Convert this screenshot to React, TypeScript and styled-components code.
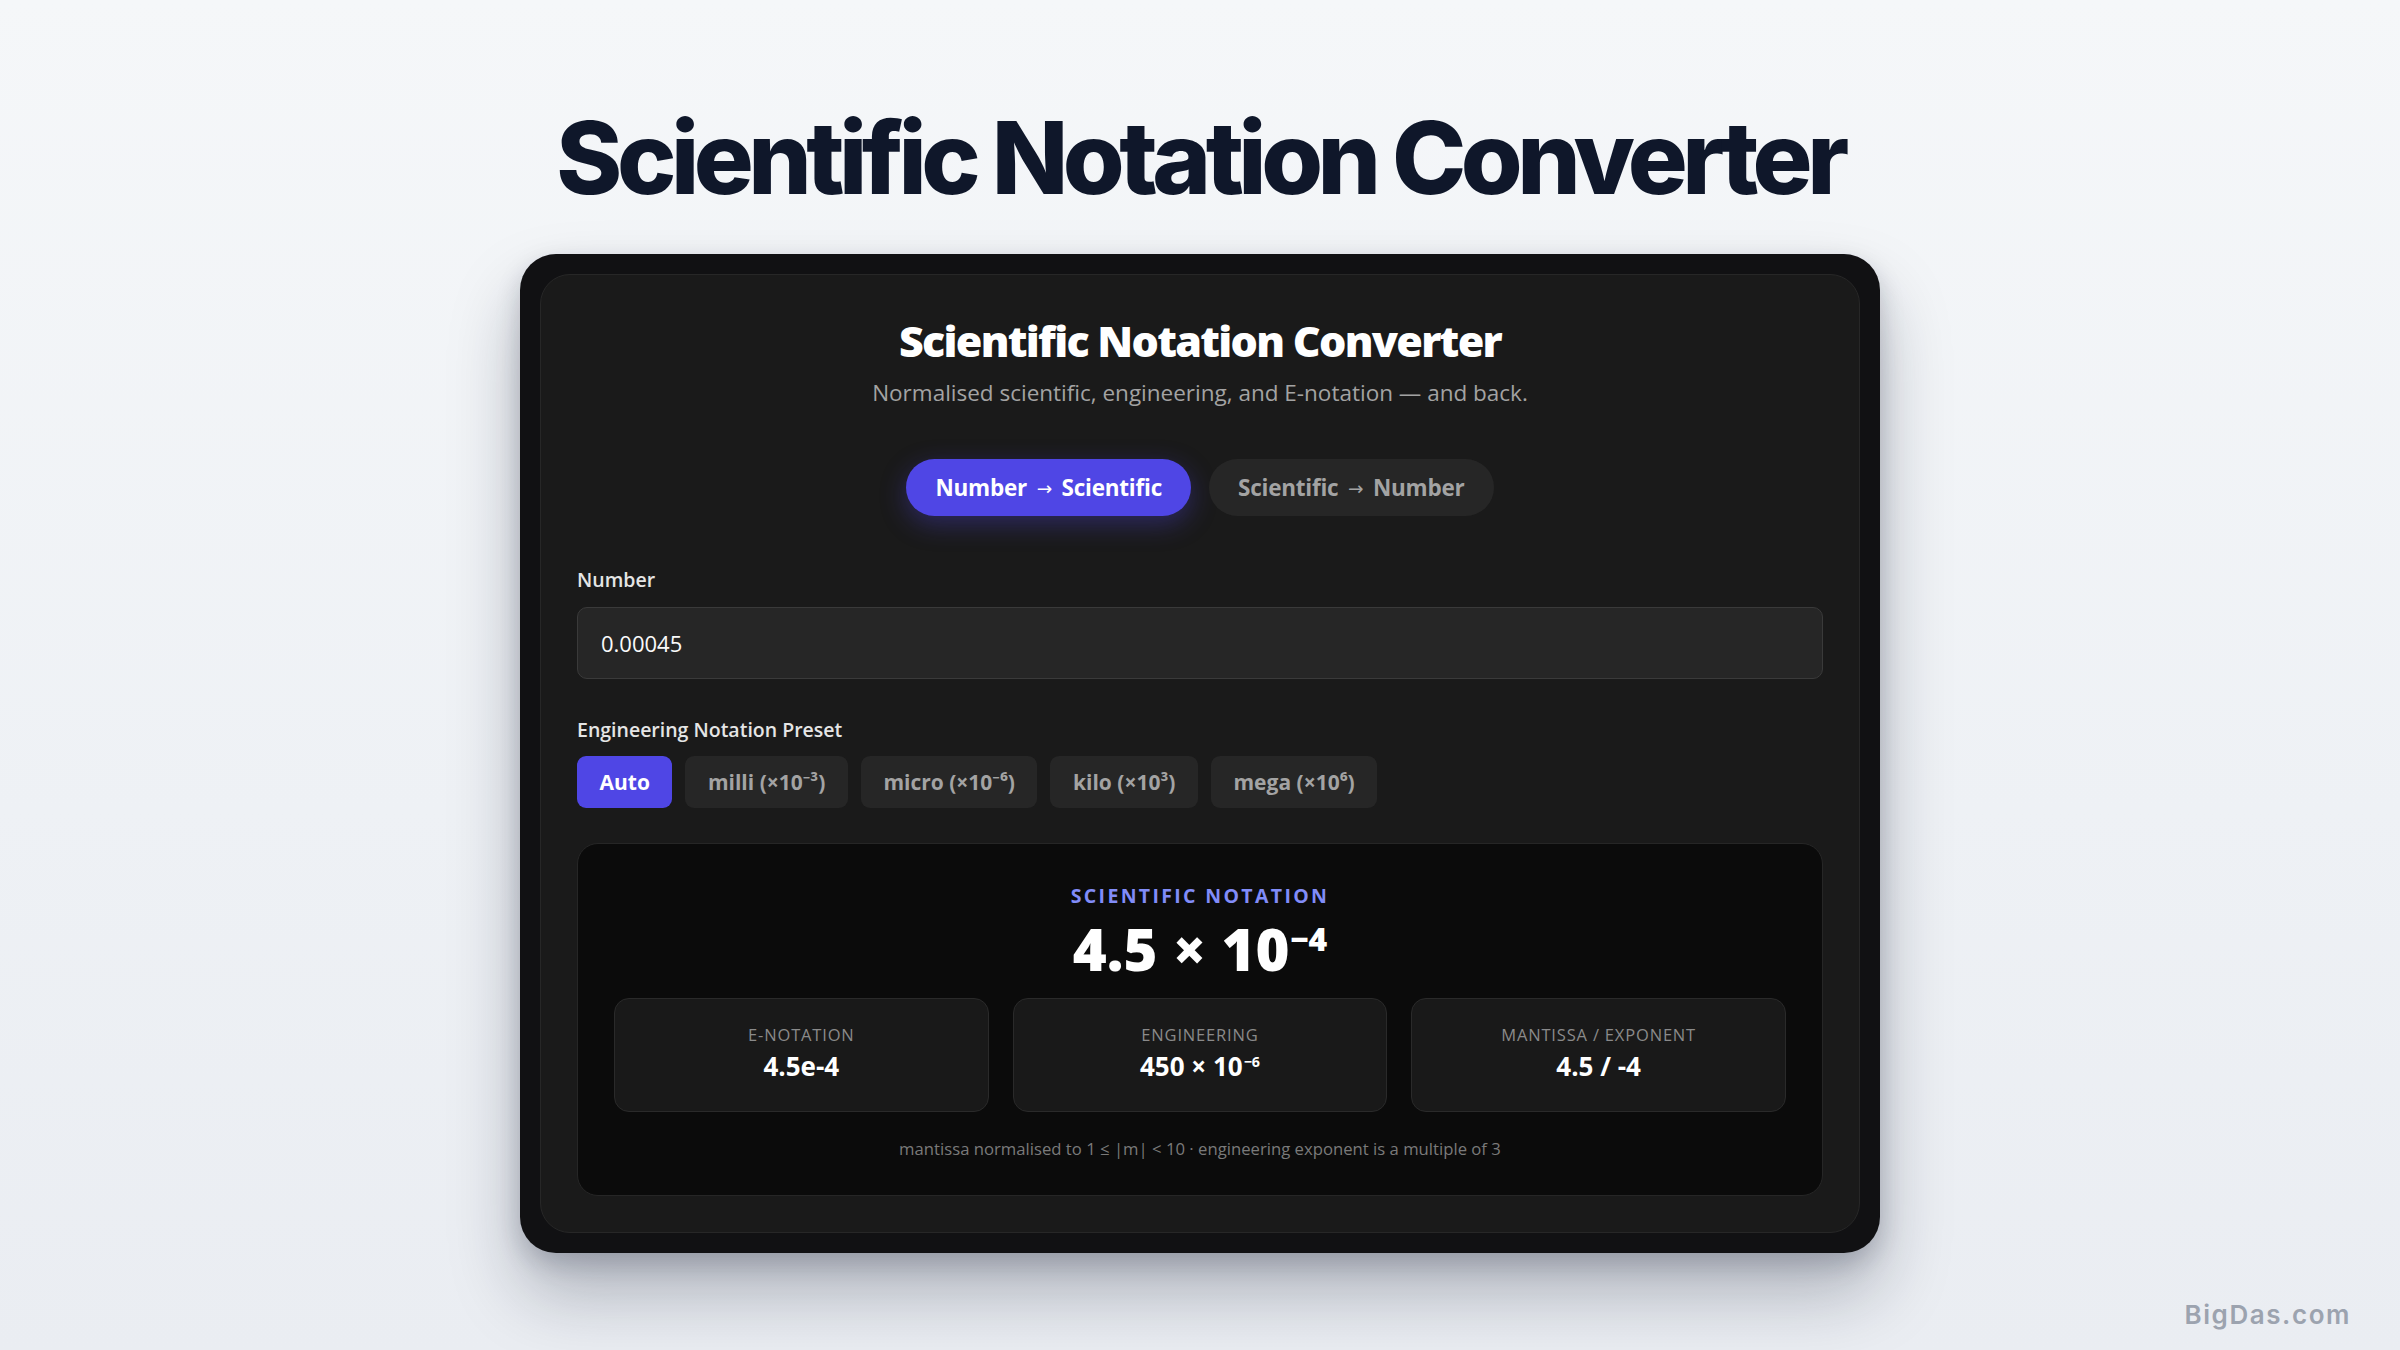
import React from "react";
import styled, { createGlobalStyle } from "styled-components";

const Global = createGlobalStyle`
  * { box-sizing: border-box; }
  html, body { margin: 0; padding: 0; }
  body {
    width: 2400px;
    height: 1350px;
    overflow: hidden;
    background: linear-gradient(180deg, #f5f7f9 0%, #eef1f5 60%, #eaedf2 100%);
    font-family: "Open Sans", "Noto Sans", sans-serif;
  }
`;

const Page = styled.main`
  position: relative;
  width: 2400px;
  height: 1350px;
  display: flex;
  flex-direction: column;
  align-items: center;
  padding-top: 104px;
`;

const PageTitle = styled.h1`
  margin: 0 0 42px;
  font-family: Inter, "Liberation Sans", sans-serif;
  font-weight: 800;
  font-size: 100px;
  line-height: 108px;
  letter-spacing: -0.055em;
  color: #0f172a;
`;

const Frame = styled.div`
  width: 1360px;
  padding: 20px;
  background: #111113;
  border-radius: 36px;
  box-shadow: 0 40px 70px rgba(15, 23, 42, 0.28), 0 10px 24px rgba(15, 23, 42, 0.18);
`;

const Card = styled.section`
  background: #1a1a1a;
  border: 1.5px solid #272727;
  border-radius: 30px;
  padding: 39px 36px 36px;
  display: flex;
  flex-direction: column;
  color: #fff;
`;

const CardTitle = styled.h2`
  margin: 0;
  text-align: center;
  font-size: 43px;
  line-height: 54px;
  font-weight: 800;
  letter-spacing: -0.04em;
  color: #ffffff;
`;

const Subtitle = styled.p`
  margin: 8px 0 0;
  text-align: center;
  font-size: 22.5px;
  line-height: 34px;
  color: #a3a3a3;
`;

const ModeRow = styled.div`
  display: flex;
  justify-content: center;
  gap: 18px;
  margin-top: 49px;
`;

const ModeButton = styled.button<{ $active?: boolean }>`
  height: 57px;
  padding: 0 29px;
  border: none;
  border-radius: 999px;
  font-family: inherit;
  font-size: 22.5px;
  font-weight: 700;
  letter-spacing: -0.01em;
  cursor: pointer;
  background: ${(p) => (p.$active ? "#4f46e5" : "#262626")};
  color: ${(p) => (p.$active ? "#ffffff" : "#a3a3a3")};
  box-shadow: ${(p) => (p.$active ? "0 8px 26px rgba(79, 70, 229, 0.35)" : "none")};
`;

const Arrow = styled.span`
  font-family: "DejaVu Sans", sans-serif;
  font-size: 0.82em;
  font-weight: 400;
  margin: 0 4px;
  position: relative;
  top: -1px;
`;

const FieldLabel = styled.label<{ $top: number }>`
  display: block;
  margin-top: ${(p) => p.$top}px;
  font-size: 19.5px;
  line-height: 27px;
  font-weight: 600;
  color: #e5e5e5;
`;

const Input = styled.input`
  margin-top: 14px;
  width: 100%;
  height: 72px;
  padding: 0 23px;
  background: #262626;
  border: 1.5px solid #3a3a3a;
  border-radius: 10px;
  color: #fafafa;
  font-family: inherit;
  font-size: 22px;
  outline: none;
`;

const ChipRow = styled.div`
  display: flex;
  gap: 13px;
  margin-top: 13px;
`;

const Chip = styled.button<{ $active?: boolean }>`
  height: 52px;
  padding: 0 22.5px;
  border: none;
  border-radius: 9px;
  font-family: inherit;
  font-size: 21px;
  font-weight: 700;
  cursor: pointer;
  background: ${(p) => (p.$active ? "#4f46e5" : "#262626")};
  color: ${(p) => (p.$active ? "#ffffff" : "#a3a3a3")};
`;

const Result = styled.div`
  margin-top: 35px;
  background: #0b0b0b;
  border: 1.5px solid #262626;
  border-radius: 21px;
  padding: 38px 36px 34px;
  display: flex;
  flex-direction: column;
  align-items: center;
`;

const ResultLabel = styled.div`
  font-size: 19.5px;
  line-height: 27px;
  font-weight: 700;
  letter-spacing: 0.12em;
  text-transform: uppercase;
  color: #818cf8;
`;

const BigValue = styled.div`
  margin-top: 4px;
  font-size: 58px;
  line-height: 72px;
  font-weight: 800;
  color: #ffffff;
`;

const Sup = styled.sup`
  font-size: 0.55em;
  line-height: 0;
  vertical-align: 0.62em;
  margin-left: 1px;
`;

const StatGrid = styled.div`
  margin-top: 13px;
  width: 100%;
  display: grid;
  grid-template-columns: repeat(3, 1fr);
  gap: 24px;
`;

const Stat = styled.div`
  height: 114px;
  background: #191919;
  border: 1.5px solid #2a2a2a;
  border-radius: 15px;
  display: flex;
  flex-direction: column;
  align-items: center;
  justify-content: center;
  padding-bottom: 4px;
`;

const StatLabel = styled.div`
  font-size: 16.5px;
  line-height: 24px;
  letter-spacing: 0.05em;
  text-transform: uppercase;
  color: #8a8a8a;
`;

const StatValue = styled.div`
  margin-top: 2px;
  font-size: 26px;
  line-height: 34px;
  font-weight: 700;
  color: #ffffff;
`;

const Footnote = styled.p`
  margin: 25px 0 0;
  font-size: 16.7px;
  line-height: 24px;
  color: #7a7a7a;
`;

const Watermark = styled.div`
  position: absolute;
  right: 49px;
  bottom: 20px;
  font-family: Inter, "Open Sans", sans-serif;
  font-size: 26px;
  font-weight: 600;
  letter-spacing: 0.06em;
  color: #9ca3af;
`;

export default function App() {
  const presets = [
    { key: "auto", label: <>Auto</>, active: true },
    { key: "milli", label: <>milli (×10⁻³)</> },
    { key: "micro", label: <>micro (×10⁻⁶)</> },
    { key: "kilo", label: <>kilo (×10³)</> },
    { key: "mega", label: <>mega (×10⁶)</> },
  ];
  return (
    <>
      <Global />
      <Page>
        <PageTitle>Scientific Notation Converter</PageTitle>
        <Frame>
          <Card>
            <CardTitle>Scientific Notation Converter</CardTitle>
            <Subtitle>Normalised scientific, engineering, and E-notation — and back.</Subtitle>
            <ModeRow>
              <ModeButton $active>
                Number{" "}<Arrow>→</Arrow>{" "}Scientific
              </ModeButton>
              <ModeButton>
                Scientific{" "}<Arrow>→</Arrow>{" "}Number
              </ModeButton>
            </ModeRow>
            <FieldLabel $top={50}>Number</FieldLabel>
            <Input defaultValue="0.00045" />
            <FieldLabel $top={37}>Engineering Notation Preset</FieldLabel>
            <ChipRow>
              {presets.map((p) => (
                <Chip key={p.key} $active={p.active}>
                  {p.label}
                </Chip>
              ))}
            </ChipRow>
            <Result>
              <ResultLabel>Scientific Notation</ResultLabel>
              <BigValue>
                4.5 × 10<Sup>−4</Sup>
              </BigValue>
              <StatGrid>
                <Stat>
                  <StatLabel>E-notation</StatLabel>
                  <StatValue>4.5e-4</StatValue>
                </Stat>
                <Stat>
                  <StatLabel>Engineering</StatLabel>
                  <StatValue>
                    450 × 10<Sup>−6</Sup>
                  </StatValue>
                </Stat>
                <Stat>
                  <StatLabel>Mantissa / Exponent</StatLabel>
                  <StatValue>4.5 / -4</StatValue>
                </Stat>
              </StatGrid>
              <Footnote>mantissa normalised to 1 ≤ |m| &lt; 10 · engineering exponent is a multiple of 3</Footnote>
            </Result>
          </Card>
        </Frame>
        <Watermark>BigDas.com</Watermark>
      </Page>
    </>
  );
}
